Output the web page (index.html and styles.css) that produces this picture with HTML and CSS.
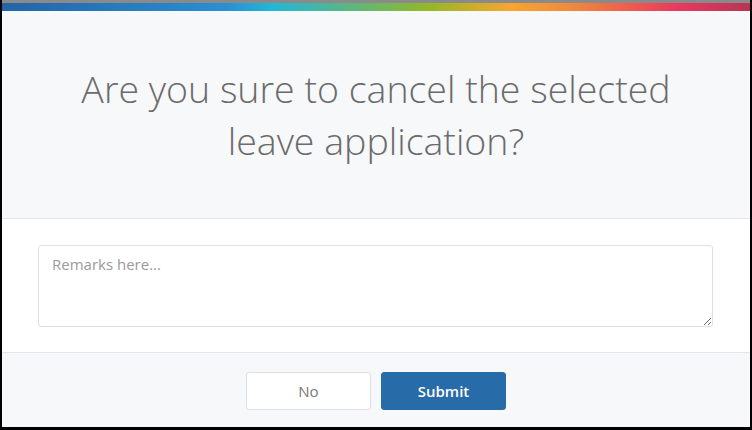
FILE: index.html
```html
<!DOCTYPE html>
<html lang="en">
<head>
  <meta charset="UTF-8">
  <title>Cancel Leave</title>
  <link rel="stylesheet" href="styles.css">
</head>
<body>

  <div class="modal">
    <div class="modal-stripe"></div>

    <div class="modal-header">
      <h2>Are you sure to cancel the selected<br>leave application?</h2>
    </div>

    <div class="modal-body">
      <textarea class="remarks" placeholder="Remarks here..."></textarea>
    </div>

    <div class="modal-footer">
      <button type="button" class="btn btn-no">No</button>
      <button type="button" class="btn btn-submit">Submit</button>
    </div>
  </div>

</body>
</html>
```

FILE: styles.css
```css
html, body {
  height: 100%;
}

body {
  margin: 0;
  background: #000;
  font-family: 'Open Sans', sans-serif;
  padding: 0 2px 3px 2px;
  box-sizing: border-box;
  display: flex;
}

.modal {
  flex: 1;
  display: flex;
  flex-direction: column;
  background: #f7f8fa;
  border-top: 3px solid #8a8a8a;
}

.modal-stripe {
  height: 8px;
  background: linear-gradient(90deg, #2364a8 0%, #2a8fd2 30%, #22b6d8 36%, #93b826 57%, #f7a532 68%, #f08a3b 76%, #ea3a5e 90%, #b83455 100%);
}

.modal-header {
  height: 207px;
  display: flex;
  align-items: center;
  justify-content: center;
  border-bottom: 1px solid #e4e6ea;
}

.modal-header h2 {
  margin: 0;
  text-align: center;
  font-weight: 300;
  font-size: 37.5px;
  line-height: 52px;
  color: #6b6b6b;
}

.modal-body {
  background: #fff;
  padding: 26px 37px 25px 36px;
  border-bottom: 1px solid #e4e6ea;
}

.remarks {
  display: block;
  width: 100%;
  height: 82px;
  box-sizing: border-box;
  border: 1px solid #dcdfe3;
  border-radius: 3px;
  padding: 8px 13px;
  font-family: 'Open Sans', sans-serif;
  font-size: 15px;
  color: #555;
  resize: vertical;
}

.remarks::placeholder {
  color: #9a9a9a;
}

.modal-footer {
  flex: 1;
  display: flex;
  justify-content: center;
  align-items: flex-start;
  gap: 10px;
  padding-top: 19px;
}

.btn {
  width: 125px;
  height: 38px;
  border-radius: 3px;
  font-family: 'Open Sans', sans-serif;
  font-size: 15px;
  cursor: pointer;
}

.btn-no {
  background: #fff;
  border: 1px solid #dcdfe3;
  color: #777;
}

.btn-submit {
  background: #276ba8;
  border: 1px solid #276ba8;
  color: #fff;
  font-weight: 600;
}
```
